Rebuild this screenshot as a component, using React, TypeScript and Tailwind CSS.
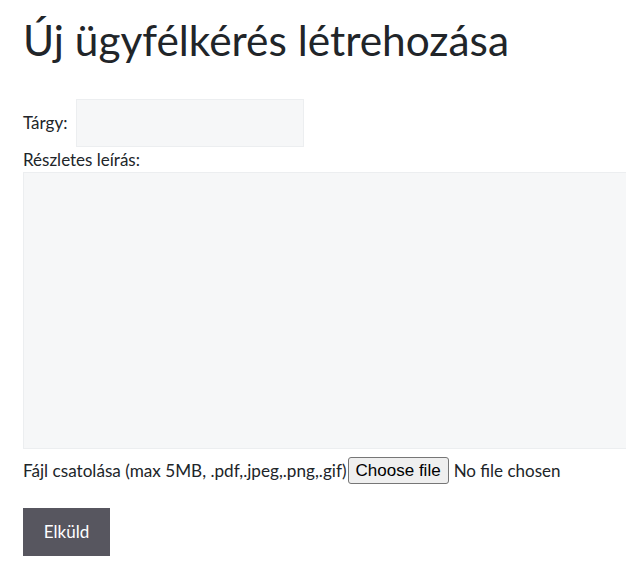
import React from "react";

export default function App() {
  return (
    <div className="min-h-[581px] w-[626px] overflow-hidden bg-white text-[#212529]" style={{ fontFamily: "Lato, 'Noto Sans', sans-serif" }}>
      <div className="pl-[23px] pt-[15px]">
        <h1 className="text-[42.4px] leading-[50px] font-normal text-[#212529]">Új ügyfélkérés létrehozása</h1>
        <form className="mt-[34px]" onSubmit={(e) => e.preventDefault()}>
          <div className="flex items-center">
            <label className="text-[17px] mr-[9px]">Tárgy:</label>
            <input type="text" className="w-[228px] h-[48px] bg-[#f6f7f8] border border-[#eceef0] outline-none" />
          </div>
          <div className="mt-[1px] text-[17px] leading-[24px]">Részletes leírás:</div>
          <textarea className="block w-[640px] h-[277px] bg-[#f6f7f8] border border-[#eceef0] outline-none resize-none" />
          <div className="mt-[8px] flex items-center text-[17.15px] leading-[26px] whitespace-nowrap">
            <span className="shrink-0">Fájl csatolása (max 5MB, .pdf,.jpeg,.png,.gif)</span>
            <label className="ml-[1px] flex items-center shrink-0 cursor-pointer">
              <input type="file" className="hidden" />
              <span
                className="h-[27px] px-[7px] border border-[#767676] rounded-[3px] bg-[#efefef] text-[17px] leading-[25px] text-black"
                style={{ fontFamily: "'Liberation Sans', Arial, sans-serif" }}
              >
                Choose file
              </span>
              <span className="ml-[5px] text-[17px]">No file chosen</span>
            </label>
          </div>
          <button type="submit" className="block mt-[24px] w-[87px] h-[48px] bg-[#57565f] text-white text-[17px]">Elküld</button>
        </form>
      </div>
    </div>
  );
}
